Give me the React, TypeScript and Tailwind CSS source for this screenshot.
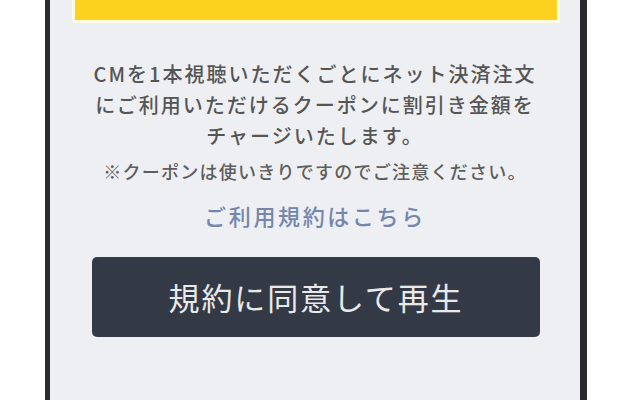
export default function App() {
  return (
    <div
      className="h-[400px] w-[640px] overflow-hidden bg-white"
      style={{ fontFamily: '"Noto Sans CJK JP", "Noto Sans", sans-serif' }}
    >
      <div className="ml-[45px] h-full w-[542px] border-l-[5px] border-r-[7px] border-[#2b2b2d] bg-[#eeeff3]">
        <div className="ml-[22px] mr-[20px] h-[23px] border-x-[3px] border-b-[3px] border-[#fffbe2] bg-[#fcd21f]" />

        <div className="mt-[35px] text-center text-[20px] font-medium leading-[31px] tracking-[0.1em] text-[#555555]">
          <p>CMを1本視聴いただくごとにネット決済注文</p>
          <p>にご利用いただけるクーポンに割引き金額を</p>
          <p>チャージいたします。</p>
        </div>

        <p className="mt-[8px] text-center text-[18px] font-medium leading-[24px] tracking-[0.07em] text-[#5e5e5e]">
          ※クーポンは使いきりですのでご注意ください。
        </p>

        <p className="mt-[17px] text-center text-[22px] font-medium leading-[30px] tracking-[0.12em] text-[#7486ae]">
          ご利用規約はこちら
        </p>

        <div className="ml-[42px] mt-[27px] flex h-[80px] w-[448px] items-center justify-center rounded-[5px] bg-[#343946]">
          <span className="text-[31px] tracking-[0.06em] text-[#e9e9ea]">規約に同意して再生</span>
        </div>
      </div>
    </div>
  );
}
